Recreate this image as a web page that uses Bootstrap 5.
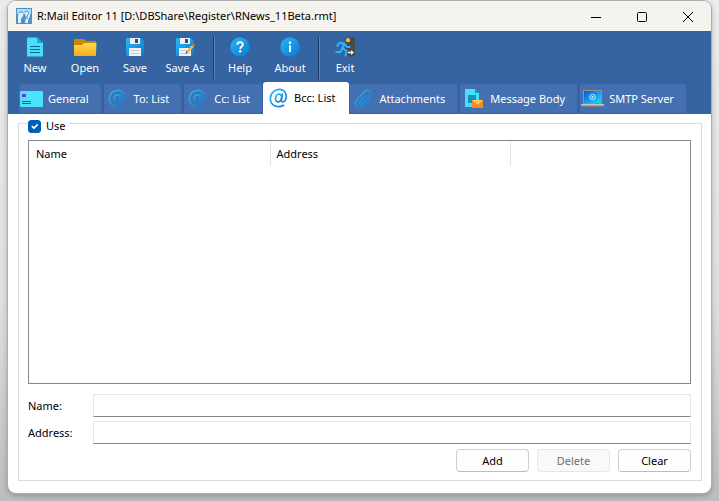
<!DOCTYPE html>
<html lang="en">
<head>
<meta charset="utf-8">
<meta name="viewport" content="width=device-width, initial-scale=1">
<title>R:Mail Editor 11</title>
<link href="https://cdn.jsdelivr.net/npm/bootstrap@5.3.0/dist/css/bootstrap.min.css" rel="stylesheet">
<style>
  body { font-family: "Noto Sans", "Open Sans", sans-serif; font-size: 11px; line-height: 16px; color: #000; padding: 1px 8px 8px; background: linear-gradient(#ececec, #e0e0e0 60%, #bdbdbd); }
  .window { background: #fff; border-radius: 8px; box-shadow: 0 0 0 1px #adadad, 0 2px 6px rgba(0,0,0,.3); }
  .titlebar { background: #f5f3ee; height: 30px; padding-left: 8px; }
  .titlebar .caption { padding-left: 5px; }
  .caption-btn { width: 46px; height: 28px; border: 0; background: none; padding: 0; }
  .ribbon { background: #3564a2; color: #fff; }
  .tools { padding: 6px 2px 0; height: 51px; }
  .tool { width: 50px; border: 0; background: none; color: inherit; padding: 0; white-space: nowrap; }
  .tool svg { margin-bottom: 3px; }
  .tool-sep { width: 2px; height: 42px; margin: 0 0 0 3px; background: linear-gradient(90deg, #1d3a66 50%, #5f86bb 50%); }
  .tab-row { padding: 0 10px 0 11px; gap: 3px; height: 32px; }
  .tab-row .tab { height: 30px; padding: 0 12px 0 1px; gap: 5px; border: 0; border-bottom: 1px solid #3564a2; border-radius: 3px 3px 0 0; background: #4470b1; color: #fff; white-space: nowrap; }
  .tab-row .at-tab { gap: 7px; padding-left: 4px; }
  .tab-row .current { height: 32px; background: #fff; color: #000; border-bottom-color: #fff; padding: 0 14px 0 6px; margin: 0 -2px; gap: 5px; }
  .pane { padding: 0 9px 12px 10px; }
  .group { border: 1px solid #dcdcdc; padding: 7px 10px 8px 9px; }
  .group legend { float: none; width: auto; height: 19px; padding: 2px 3px 0 0; margin: 0; font-size: 11px; line-height: 20px; }
  .group .use-box { width: 13px; height: 13px; margin: 0; border-radius: 3px; }
  .group .use-box:checked { background-color: #005fb8; border-color: #005fb8; }
  .group .use-label { padding-left: 5px; }
  .list-box { border: 1px solid #828790; margin-bottom: 10px; }
  .list-box th { height: 25px; padding: 0 6px; font-weight: 400; border-right: 1px solid #e5e5e5; }
  .list-box th:first-child { padding-left: 7px; }
  .list-box th:last-child { border: 0; }
  .fields { gap: 4px; margin-bottom: 5px; }
  .fields label { width: 65px; }
  .fields input { height: 23px; padding: 0 6px; font-size: 11px; border: 1px solid #e8e8e8; border-bottom-color: #808488; border-radius: 1px; }
  .push { width: 73px; height: 23px; padding: 0; font-size: 11px; line-height: 16px; border: 1px solid #cfcfcf; border-bottom-color: #bcbcbc; border-radius: 4px; background: #fefefe; color: #000; }
  .push:disabled { background: #f9f9f9; border-color: #e6e6e6; color: #707070; opacity: 1; }
</style>
<script defer src="https://cdn.jsdelivr.net/npm/bootstrap@5.3.0/dist/js/bootstrap.bundle.min.js"></script>
</head>
<body class="min-vh-100 d-flex">
<svg width="0" height="0" class="position-absolute" aria-hidden="true">
  <defs>
    <linearGradient id="cyanBlue" x2="1" y2="1"><stop stop-color="#27b8f5"/><stop offset="1" stop-color="#0a78d4"/></linearGradient>
    <linearGradient id="folder" x2="0" y2="1"><stop stop-color="#ffd84c"/><stop offset="1" stop-color="#f3ae1c"/></linearGradient>
    <linearGradient id="screen" x2="1" y2="1"><stop stop-color="#0754e5"/><stop offset="1" stop-color="#23dcf5"/></linearGradient>
    <symbol id="at" viewBox="0 0 20 20"><g fill="none" stroke="url(#cyanBlue)" stroke-width="1.7" stroke-linecap="round"><ellipse cx="9.5" cy="10" rx="3" ry="3.9" transform="rotate(18 9.5 10)"/><path d="M13.4 6.2 12.3 12.2c-.3 2.4 2.9 2.1 4.2-.4C18.700 7 16 1.400 10.400 1.400 5.300 1.400 1.300 5.500 1.300 10.400c0 7 7.400 10.200 13.200 6.800"/></g></symbol>
    <symbol id="disk" viewBox="0 0 20 20"><path fill="url(#cyanBlue)" d="M1 2q0-1 1-1h14l3 3v14q0 1-1 1H2q-1 0-1-1z"/><path fill="#edf2f5" d="M5 1h10v6H5zM4 11h12v8H4z"/><path fill="#3b4b5c" d="M10 2h3v4h-3z"/><path stroke="#c2cdd4" d="M5.500 13.500h9M5.500 16.500h9"/></symbol>
  </defs>
</svg>
<main class="window flex-grow-1 d-flex flex-column overflow-hidden">
  <header class="titlebar d-flex align-items-center">
    <svg width="16" height="16" viewBox="0 0 16 16" aria-hidden="true"><path fill="#4f93cc" d="M0 0h16v16H0z"/><path fill="#b5d8f0" d="M1 1h14v5H1z"/><path fill="#e2f1fa" d="M2 9c0-6 4-5 5-3s-1 3-2 5v4H2zM9 6c1-5 6-4 5 1s-2 3-2 8H9l1-6z"/><path fill="none" stroke="#3f87c4" d="M3 5q2-3 4 0M9 4q3-2 4 1-1 2-2 3v3M7 12v4"/></svg>
    <span class="caption flex-grow-1 text-truncate">R:Mail Editor 11 [D:\DBShare\Register\RNews_11Beta.rmt]</span>
    <button class="caption-btn" type="button" aria-label="Minimize"><svg width="12" height="12" stroke="#000" fill="none"><path d="M1 6.500h10"/></svg></button>
    <button class="caption-btn" type="button" aria-label="Maximize"><svg width="12" height="12" stroke="#000" fill="none"><rect x="1.500" y="1.500" width="9" height="9" rx="1"/></svg></button>
    <button class="caption-btn" type="button" aria-label="Close"><svg width="12" height="12" stroke="#000" fill="none"><path d="m1 1 10 10M11 1 1 11"/></svg></button>
  </header>

  <div class="ribbon">
    <div class="tools d-flex" role="toolbar" aria-label="Main">
      <button class="tool d-flex flex-column align-items-center" type="button"><svg width="20" height="20" viewBox="0 0 20 20"><path fill="#45e0fb" d="M3 .5h9l6 5.500v13.500H2V1.500q0-1 1-1z"/><path fill="#1ea9dc" d="M12 .5 18 6h-6z"/><path stroke="#176287" stroke-width="1.200" d="M5 9.500h10M5 12.500h10M5 15.500h10"/></svg>New</button>
      <button class="tool d-flex flex-column align-items-center" type="button"><svg width="24" height="20" viewBox="0 0 24 20"><path fill="#c98506" d="M1 3q0-1 1-1h9l2 2h9q1 0 1 1v12H1z"/><path fill="url(#folder)" d="M1 8h8l2-2h12.500L23 18q0 1-1 1H2q-1 0-1-1z"/></svg>Open</button>
      <button class="tool d-flex flex-column align-items-center" type="button"><svg width="20" height="20"><use href="#disk"/></svg>Save</button>
      <button class="tool d-flex flex-column align-items-center" type="button"><svg width="20" height="20" viewBox="0 0 20 20"><use href="#disk"/><path stroke="#f5bd24" stroke-width="2.500" d="m12 15 6-6"/><path stroke="#e9604e" stroke-width="2.500" d="m18 9 1.500-1.500"/><path fill="#4b4440" d="m10.500 16.500.8-2.300 1.500 1.500z"/></svg>Save As</button>
      <span class="tool-sep"></span>
      <button class="tool d-flex flex-column align-items-center" type="button"><svg width="20" height="20" viewBox="0 0 20 20"><circle cx="10" cy="10" r="9.700" fill="url(#cyanBlue)"/><path fill="none" stroke="#fff" stroke-width="1.900" d="M7.300 7.800C7.300 4.300 12.900 4.300 12.900 7.500 12.900 9.600 10.200 9.500 10.200 12"/><circle cx="10.200" cy="14.300" r="1.200" fill="#fff"/></svg>Help</button>
      <button class="tool d-flex flex-column align-items-center" type="button"><svg width="20" height="20" viewBox="0 0 20 20"><circle cx="10" cy="10" r="9.700" fill="url(#cyanBlue)"/><path stroke="#fff" stroke-width="2" d="M10 8.200V15"/><circle cx="10" cy="5.700" r="1.300" fill="#fff"/></svg>About</button>
      <span class="tool-sep"></span>
      <button class="tool d-flex flex-column align-items-center" type="button"><svg width="20" height="20" viewBox="0 0 20 20"><path fill="#4b4b4d" d="M10 .5h10v19H10z"/><circle cx="13" cy="3.200" r="2.100" fill="#f8ba25"/><path fill="none" stroke="#28b5f5" stroke-width="2" stroke-linejoin="round" d="M2 9.500 4 6l5 .3L7.500 11l4 3-1 5.500M7.500 11 5.500 15H.5M9 6.500l3 3.500h3.500"/><path stroke="#f2f2f2" stroke-width="1.500" d="M13 15.500h4"/><path fill="#f2f2f2" d="m16 13 3 2.500-3 2.500z"/></svg>Exit</button>
    </div>

    <nav class="tab-row d-flex align-items-end" role="tablist" aria-label="Message sections">
      <button class="tab d-flex align-items-center" type="button" role="tab"><svg width="23" height="18" viewBox="0 0 23 18"><rect y="1" width="23" height="16" rx="1" fill="#4be4fc"/><path fill="#9223dc" d="M2 4h4v3H2z"/><path stroke="#176287" d="M2 11.500h9M2 13.500h9"/></svg>General</button>
      <button class="tab at-tab d-flex align-items-center" type="button" role="tab"><svg width="19" height="19"><use href="#at"/></svg>To: List</button>
      <button class="tab at-tab d-flex align-items-center" type="button" role="tab"><svg width="19" height="19"><use href="#at"/></svg>Cc: List</button>
      <button class="tab current d-flex align-items-center" type="button" role="tab" aria-selected="true"><svg width="20" height="20"><use href="#at"/></svg>Bcc: List</button>
      <button class="tab at-tab d-flex align-items-center" type="button" role="tab"><svg width="18" height="20" viewBox="0 0 18 20"><path fill="none" stroke="url(#cyanBlue)" stroke-width="1.500" stroke-linecap="round" d="m11.500 7-5.800 6.500c-1.200 1.800 1 3.300 2.500 1.700l7.500-8.500c3-4-2-7.500-5-4.200L2.800 11c-4 5 2 10.500 6.700 5.800l6.500-7"/></svg>Attachments</button>
      <button class="tab at-tab d-flex align-items-center" type="button" role="tab"><svg width="19" height="21" viewBox="0 0 19 21"><path fill="#42e0fa" d="M1 1h10l4 4v14H1z"/><path fill="#1494bd" d="M11 1v4h4zM4 7h8v8H4z"/><path fill="#f38b20" d="M8 12h11v8H8z"/><path fill="#ffc55b" d="M8 12h11l-5.500 5z"/></svg>Message Body</button>
      <button class="tab d-flex align-items-center" type="button" role="tab"><svg width="23" height="19" viewBox="0 0 23 19"><path fill="#9a8c80" d="M2 1h19v14H2z"/><path fill="url(#screen)" d="M3 2h17v12H3z"/><path fill="#7b7f84" d="M0 16h23l-1.500 2h-20z"/><path fill="#c4c5c5" d="M0 15h23v1.500H0z"/><circle cx="11.500" cy="8" r="2.700" fill="none" stroke="#bdefff"/><circle cx="11.500" cy="8" r="1" fill="#e5faff"/></svg>SMTP Server</button>
    </nav>
  </div>

  <section class="pane flex-grow-1 d-flex flex-column">
    <fieldset class="group flex-grow-1 d-flex flex-column">
      <legend class="ms-0"><span class="d-flex align-items-center"><input class="form-check-input use-box" type="checkbox" id="use" checked><label class="use-label" for="use">Use</label></span></legend>
      <div class="list-box flex-grow-1">
        <table class="w-100">
          <colgroup><col width="241"><col width="240"><col></colgroup>
          <thead><tr><th scope="col">Name</th><th scope="col">Address</th><th></th></tr></thead>
        </table>
      </div>
      <div class="fields d-flex flex-column">
        <div class="d-flex align-items-center"><label for="name">Name:</label><input class="form-control flex-grow-1 w-auto" id="name" type="text"></div>
        <div class="d-flex align-items-center"><label for="address">Address:</label><input class="form-control flex-grow-1 w-auto" id="address" type="text"></div>
      </div>
      <div class="d-flex justify-content-end gap-2">
        <button class="btn push" type="button">Add</button>
        <button class="btn push" type="button" disabled>Delete</button>
        <button class="btn push" type="button">Clear</button>
      </div>
    </fieldset>
  </section>
</main>
</body>
</html>
